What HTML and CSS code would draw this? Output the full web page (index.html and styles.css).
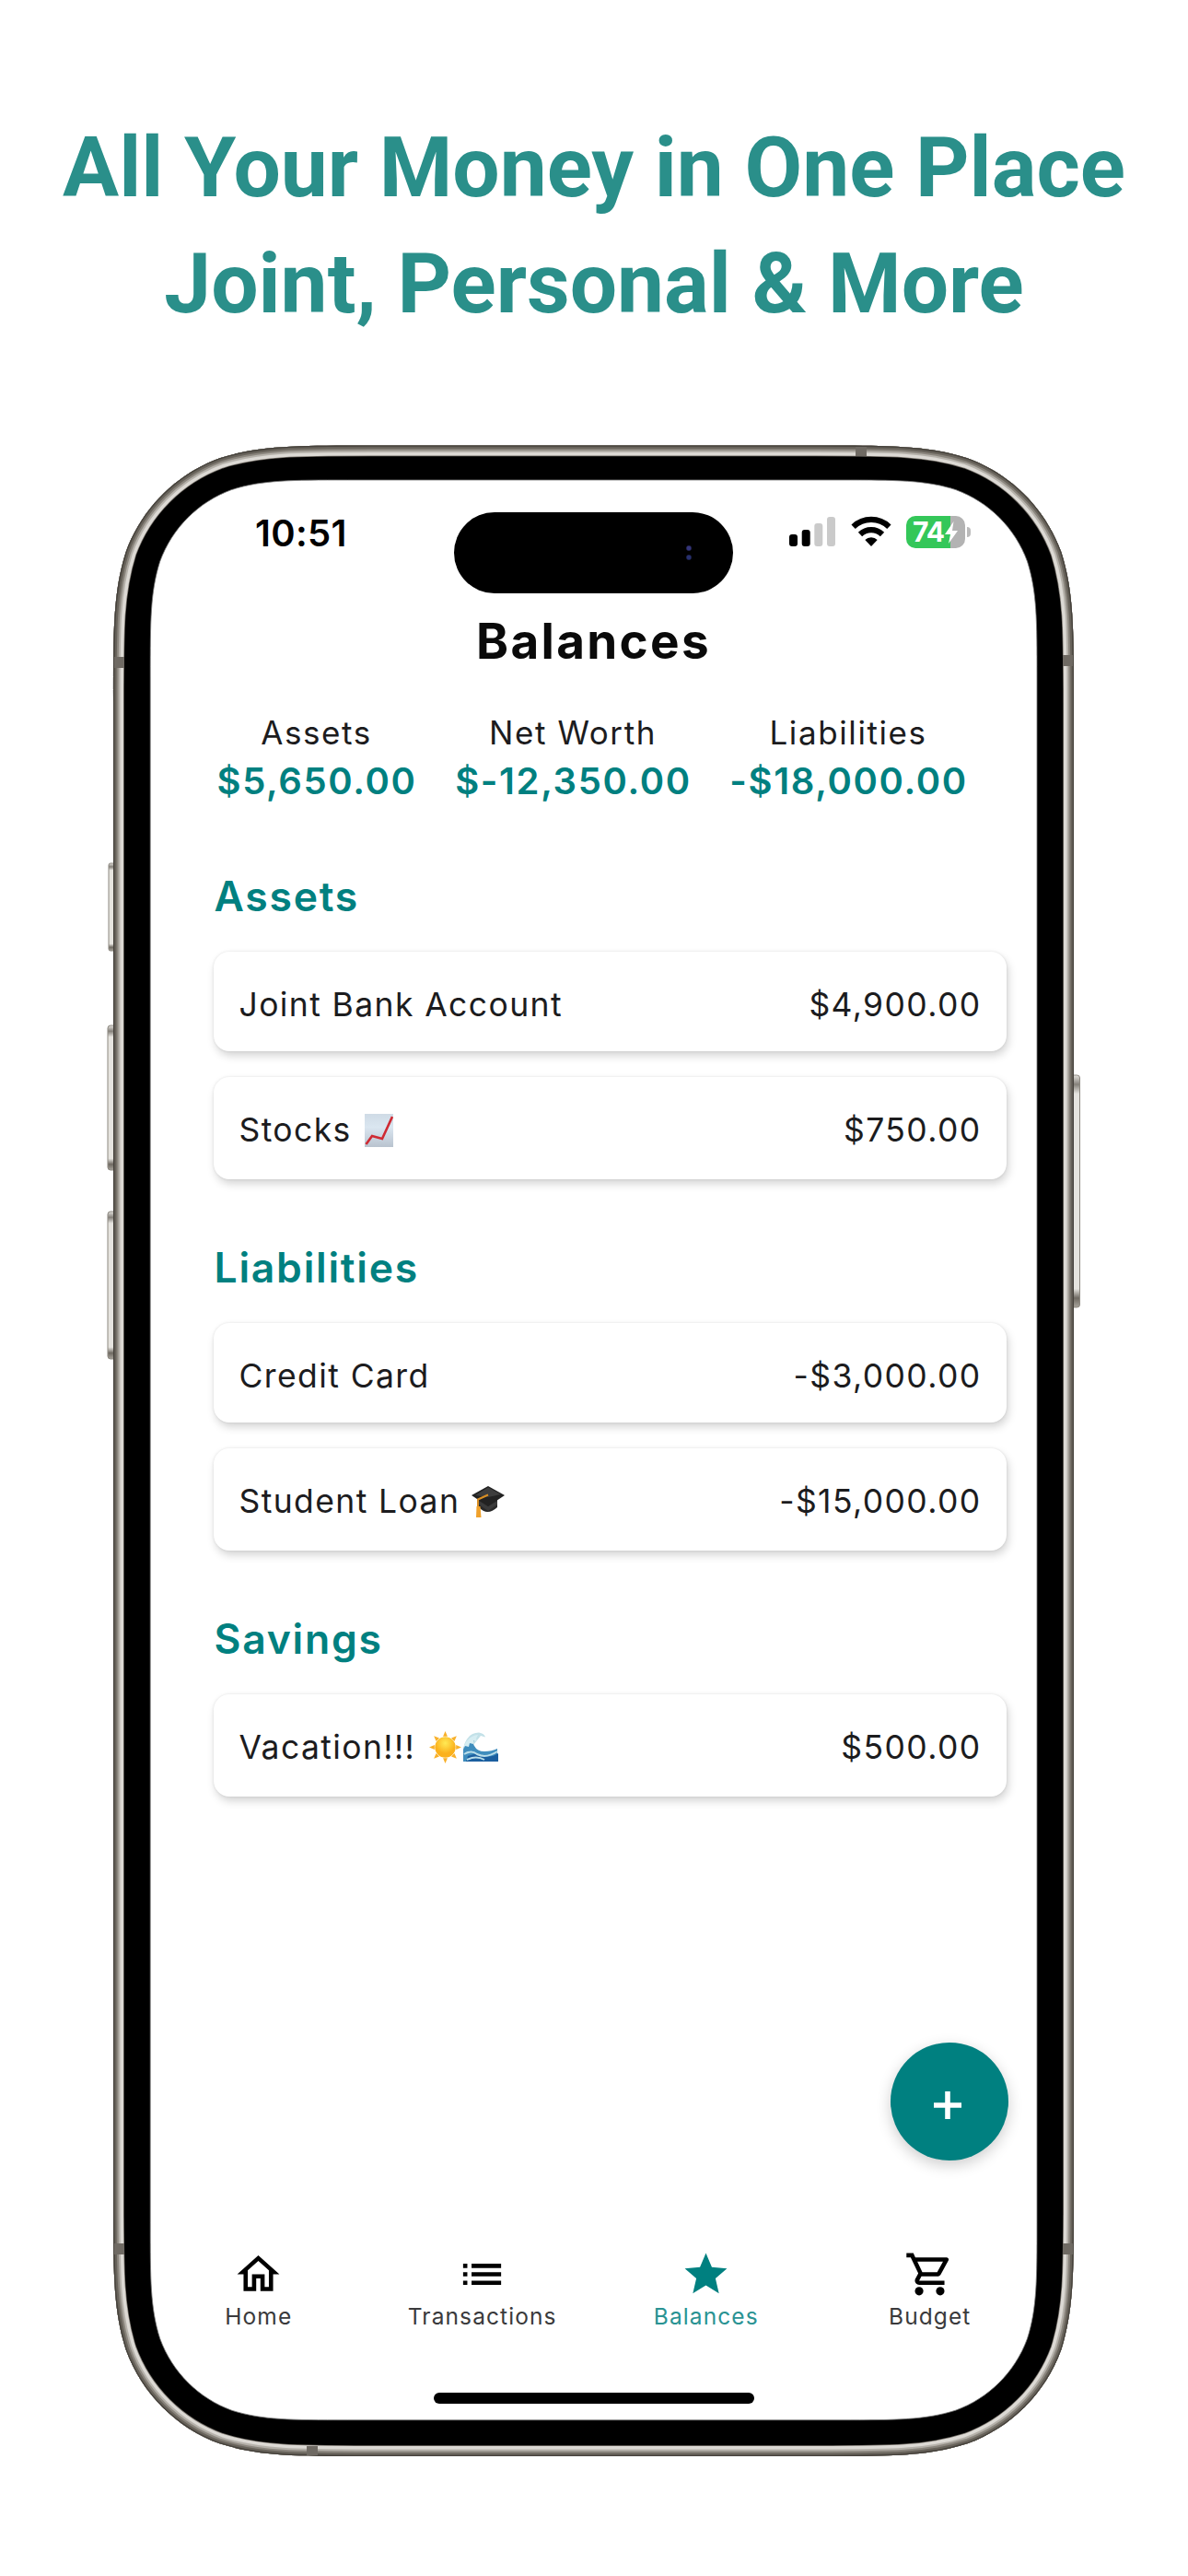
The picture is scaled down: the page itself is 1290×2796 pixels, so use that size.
FILE: index.html
```html
<!DOCTYPE html>
<html lang="en">
<head>
<meta charset="utf-8">
<title>Balances</title>
<link rel="stylesheet" href="styles.css">
</head>
<body>
<h1 class="headline">All Your Money in One Place<br>Joint, Personal &amp; More</h1>

<main class="device">
  <svg class="frame" viewBox="105 473 1080 2200" aria-hidden="true">
    <defs>
      <path id="shell" d="M402.7,483.5H886.3c80.5,0 120.8,0 164.1,13.7c47.3,17.2 84.6,54.5 101.9,101.9c13.7,43.3 13.7,83.6 13.7,164.1V2386.3c0,80.5 0,120.8 -13.7,164.1c-17.2,47.3 -54.5,84.6 -101.9,101.9c-43.3,13.7 -83.6,13.7 -164.1,13.7H402.7c-80.5,0 -120.8,0 -164.1,-13.7c-47.3,-17.2 -84.6,-54.5 -101.9,-101.9c-13.7,-43.3 -13.7,-83.6 -13.7,-164.1V763.2c0,-80.5 0,-120.8 13.7,-164.1c17.2,-47.3 54.5,-84.6 101.9,-101.9c43.3,-13.7 83.6,-13.7 164.1,-13.7z"/>
      <clipPath id="inside"><use href="#shell"/></clipPath>
      <linearGradient id="btn" x1="0" y1="0" x2="0" y2="1">
        <stop offset="0" stop-color="#e4e2de"/><stop offset=".04" stop-color="#85817a"/><stop offset=".08" stop-color="#e6e4df"/>
        <stop offset=".92" stop-color="#e6e4df"/><stop offset=".96" stop-color="#6f6a62"/><stop offset="1" stop-color="#a8a49c"/>
      </linearGradient>
    </defs>
    <g fill="url(#btn)" stroke="#8d8981" stroke-width="1">
      <rect x="118" y="937" width="9" height="95" rx="2"/>
      <rect x="117" y="1113" width="10" height="157" rx="3"/>
      <rect x="117" y="1315" width="10" height="160" rx="3"/>
      <rect x="1162" y="1167" width="10.500" height="252" rx="3"/>
    </g>
    <use href="#shell" fill="#000"/>
    <g clip-path="url(#inside)" fill="none">
      <use href="#shell" stroke="#76716a" stroke-width="23.500"/>
      <use href="#shell" stroke="#dcd9d4" stroke-width="22"/>
      <use href="#shell" stroke="#b5b1aa" stroke-width="15"/>
      <use href="#shell" stroke="#8a857d" stroke-width="11"/>
      <use href="#shell" stroke="#67625a" stroke-width="7"/>
      <use href="#shell" stroke="#46423c" stroke-width="2.500"/>
      <g fill="#6f6a63">
        <rect x="124" y="713" width="11" height="12"/><rect x="1154" y="711" width="11" height="12"/>
        <rect x="124" y="2435" width="11" height="12"/><rect x="1154" y="2435" width="11" height="12"/>
        <rect x="929" y="485" width="12" height="10"/><rect x="333" y="2655" width="12" height="10"/>
      </g>
    </g>
    <path fill="#fff" stroke="#777" stroke-width=".8" d="M377.2,521H912c61.600,0 92.400,0 125.600,10.500c36.200,13.200 64.700,41.700 77.900,77.900c10.500,33.200 10.500,64 10.500,125.600V2412.700c0,61.600 0,92.400 -10.500,125.600c-13.200,36.200 -41.700,64.700 -77.900,77.900c-33.200,10.500 -64,10.500 -125.600,10.500H377.200c-61.600,0 -92.400,0 -125.600,-10.500c-36.200,-13.200 -64.700,-41.700 -77.900,-77.900c-10.500,-33.200 -10.500,-64 -10.500,-125.600V735c0,-61.600 0,-92.400 10.500,-125.600c13.200,-36.200 41.700,-64.700 77.900,-77.900c33.200,-10.500 64,-10.500 125.600,-10.500z"/>
  </svg>

  <div class="screen">
    <div class="status">
      <span class="time">10:51</span>
      <div class="island"><span class="lens"></span></div>
      <div class="indicators">
        <svg class="signal" viewBox="0 0 50 32"><rect y="19" width="9" height="13" rx="3"/><rect x="13.700" y="14" width="9" height="18" rx="3"/><g fill="#cacaca"><rect x="27.300" y="7" width="9" height="25" rx="3"/><rect x="41" width="9" height="32" rx="3"/></g></svg>
        <svg class="wifi" viewBox="0 0 44 33"><g fill="none" stroke="#000" stroke-width="6.200"><path d="M2.600 11.700a28 28 0 0 1 38.800 0"/><path d="M10 20a17.300 17.300 0 0 1 24 0"/></g><path d="M22 33l-6.700-7a9.800 9.800 0 0 1 13.400 0z"/></svg>
        <div class="battery"><span>74</span><svg viewBox="0 0 16 26"><path fill="#fff" d="M10.500 1L1 15h6l-2 10L15 11H9z"/></svg></div>
      </div>
    </div>

    <h2 class="title">Balances</h2>

    <div class="summary">
      <div class="stat"><span class="stat-label">Assets</span><span class="stat-value">$5,650.00</span></div>
      <div class="stat"><span class="stat-label">Net Worth</span><span class="stat-value">$-12,350.00</span></div>
      <div class="stat"><span class="stat-label">Liabilities</span><span class="stat-value">-$18,000.00</span></div>
    </div>

    <section class="group">
      <h3>Assets</h3>
      <div class="card plain"><span>Joint Bank Account</span><span>$4,900.00</span></div>
      <div class="card"><span>Stocks <svg class="emoji chart" viewBox="0 0 31 36"><defs><linearGradient id="paper" x1="0" y1="0" x2="0" y2="1"><stop stop-color="#cfdbe6"/><stop offset=".4" stop-color="#dae6f0"/><stop offset="1" stop-color="#b9c3cf"/></linearGradient></defs><path fill="url(#paper)" d="M0 0h31v36H0z"/><path d="M1.500 33L8 24l11 3L30 3" fill="none" stroke="#cf2a33" stroke-width="2.600"/></svg></span><span>$750.00</span></div>
    </section>

    <section class="group">
      <h3>Liabilities</h3>
      <div class="card plain"><span>Credit Card</span><span>-$3,000.00</span></div>
      <div class="card"><span>Student Loan <svg class="emoji grad" viewBox="0 0 36 35"><path fill="#292929" d="M8 14v10q9 10 20 0V14z"/><path fill="#3a3a3a" d="M8 17v4l10 7 10-7v-4l-10 6z"/><path fill="#222" d="M0 11L18 1l18 10-18 12z"/><path fill="#3d3d3d" d="M4 11L18 2.500 32 10 18 13z"/><path d="M18 10.500L7 15.500V26" fill="none" stroke="#d98f24" stroke-width="2"/><path fill="#f0a12b" d="M5.500 23h4l1 12H5z"/></svg></span><span>-$15,000.00</span></div>
    </section>

    <section class="group">
      <h3>Savings</h3>
      <div class="card"><span>Vacation!!! <svg class="emoji sun" viewBox="0 0 36 36"><defs><radialGradient id="sunfill" cy=".3"><stop stop-color="#ffea55"/><stop offset="1" stop-color="#fbb11c"/></radialGradient></defs><path fill="#f8b02a" d="M18 0l2.500 6h-5zM18 36l2.500-6h-5zM0 18l6-2.500v5zM36 18l-6-2.500v5zM5.300 5.300l6 2.500-3.500 3.500zM30.700 5.300l-6 2.500 3.500 3.500zM5.300 30.700l6-2.500-3.500-3.500zM30.700 30.700l-6-2.500 3.500-3.500z"/><circle cx="18" cy="18" r="11.500" fill="url(#sunfill)"/></svg><svg class="emoji wave" viewBox="0 0 38 32"><path fill="#c3e1e8" d="M1 14Q5 1 17 .5q6 1 7 5l-5-1.500-8 10z"/><path fill="#3f8dbd" d="M0 32V18Q4 6 14 5q-5 6-2 10 3 6 11 6 8 0 14-3v14z"/><path fill="#d6edf2" d="M1 14Q6 4 16 3l-2 4 1 3-4-1 0 4-4-1-1 4-4-1-2 4z"/><path fill="#1b5f9f" d="M5 26q12-5 18 0 8 2 15-3v9H3z"/><path d="M1 24q8-5 14 0 10 5 22-3M4 30q10-5 19 0" fill="none" stroke="#b8dde9" stroke-width="2"/></svg></span><span>$500.00</span></div>
    </section>

    <button class="fab" aria-label="Add"><svg viewBox="0 0 30 30"><path d="M15 0v30M0 15h30" stroke="#fff" stroke-width="5.600"/></svg></button>

    <nav class="tabs">
      <a class="tab"><svg viewBox="0 0 24 24"><path d="M12 5.690l5 4.500V18h-2v-6H9v6H7v-7.810l5-4.500M12 3L2 12h3v8h6v-6h2v6h6v-8h3L12 3z"/></svg><span>Home</span></a>
      <a class="tab"><svg viewBox="0 0 24 24"><path d="M3 7h2v2H3zM3 11h2v2H3zM3 15h2v2H3zM7 7h14v2H7zM7 11h14v2H7zM7 15h14v2H7z"/></svg><span>Transactions</span></a>
      <a class="tab active"><svg viewBox="0 0 24 24"><path d="M12 17.270L18.180 21l-1.640-7.030L22 9.240l-7.190-.61L12 2 9.190 8.630 2 9.240l5.460 4.730L5.820 21z"/></svg><span>Balances</span></a>
      <a class="tab"><svg viewBox="0 0 24 24"><path d="M15.550 13c.75 0 1.410-.41 1.750-1.030l3.580-6.490c.37-.66-.11-1.480-.87-1.480H5.210l-.94-2H1v2h2l3.600 7.590-1.350 2.440C4.520 15.370 5.480 17 7 17h12v-2H7l1.100-2h7.450zM6.160 6h12.150l-2.760 5H8.530L6.160 6z"/><circle cx="7" cy="20" r="2"/><circle cx="17" cy="20" r="2"/></svg><span>Budget</span></a>
    </nav>
    <div class="home-bar"></div>
  </div>
</main>
</body>
</html>
```
FILE: styles.css
```css
* { box-sizing: border-box; }
body {
  margin: 0;
  width: 1290px;
  height: 2796px;
  overflow: hidden;
  background: #fff;
  color: #1c1c1e;
  font-family: Inter, "Liberation Sans", sans-serif;
}
h1, h2, h3 { margin: 0; }
svg { display: block; }

.headline {
  padding-top: 119px;
  text-align: center;
  font: 700 91px/126px Roboto, "Liberation Sans", sans-serif;
  color: #2a8f8a;
}

.device {
  position: relative;
  width: 1043px;
  margin: 112px 0 0 123px;
  padding: 38px 40px;
}
.frame {
  position: absolute;
  left: -18px;
  top: -10px;
  width: 1080px;
  height: 2200px;
}
.screen {
  position: relative;
  display: flex;
  flex-direction: column;
  width: 963px;
  height: 2106px;
  padding-bottom: 18px;
}

.status {
  display: grid;
  grid-template-columns: 330px 303px 1fr;
  align-items: start;
  height: 123px;
  padding-top: 35px;
}
.time {
  padding: 3px 0 0 114px;
  font-size: 40px;
  line-height: 40px;
  font-weight: 600;
  letter-spacing: .3px;
  color: #000;
}
.island {
  display: flex;
  align-items: center;
  justify-content: flex-end;
  height: 88px;
  padding-right: 45px;
  border-radius: 44px;
  background: #000;
}
.lens {
  width: 6px;
  height: 16px;
  background: radial-gradient(circle at 3px 3px, #34357a 0 2px, transparent 3.500px), radial-gradient(circle at 3px 13px, #28306e 0 2px, transparent 3.500px);
}
.indicators {
  display: flex;
  align-items: flex-start;
  padding: 4px 0 0 61px;
}
.signal { width: 50px; height: 32px; margin-top: 1px; }
.wifi { width: 44px; height: 33px; margin-left: 17px; }
.battery {
  position: relative;
  display: flex;
  align-items: center;
  width: 64px;
  height: 35px;
  margin-left: 16px;
  padding-left: 7px;
  border-radius: 10px;
  background: linear-gradient(90deg, #34c759 48px, #b3b3b3 48px);
  color: #fff;
  font-size: 30px;
  line-height: 35px;
  font-weight: 700;
  letter-spacing: -1px;
}
.battery svg { width: 16px; height: 26px; }
.battery::after {
  content: "";
  position: absolute;
  left: 66px;
  top: 12px;
  width: 4px;
  height: 11px;
  border-radius: 0 4px 4px 0;
  background: #bbb;
}

.title {
  margin-top: 22px;
  text-align: center;
  font-size: 53px;
  line-height: 60px;
  font-weight: 700;
  letter-spacing: 2.300px;
  color: #0a0a0a;
}
.summary {
  display: flex;
  gap: 41.500px;
  margin-top: 47px;
  padding-left: 72.500px;
}
.stat {
  display: flex;
  flex-direction: column;
  align-items: center;
  gap: 4px;
  white-space: nowrap;
}
.stat-label { margin-left: -1px; font-size: 35px; line-height: 44px; letter-spacing: 1.600px; }
.stat-value { font-size: 40px; line-height: 54px; font-weight: 600; letter-spacing: 1.650px; color: #008080; }

.group {
  display: flex;
  flex-direction: column;
  gap: 28px;
  padding: 0 33.500px 0 68.500px;
  margin-top: 69px;
}
.summary + .group { margin-top: 71px; }
.group h3 {
  margin-bottom: 4.500px;
  padding-left: 1px;
  font-size: 44.500px;
  line-height: 54px;
  font-weight: 600;
  letter-spacing: 1.750px;
  color: #008080;
}
.card {
  display: flex;
  align-items: center;
  justify-content: space-between;
  height: 111px;
  padding: 4.500px 27px 0 28px;
  border-radius: 17px;
  background: #fff;
  box-shadow: 2px 5px 10px rgba(0, 0, 0, .17), 0 0 3px rgba(0, 0, 0, .1);
  font-size: 35.500px;
  letter-spacing: 1.400px;
  white-space: nowrap;
}
.card.plain { height: 108.500px; padding-top: 7px; }
.card span { display: flex; align-items: center; white-space: pre; }
.emoji { flex: none; }
.chart { width: 31px; height: 36px; margin-left: 3px; }
.grad { width: 36px; height: 35px; margin-left: 1.500px; }
.sun { width: 35px; height: 35px; margin-left: 3px; }
.wave { width: 38px; height: 32px; margin-left: 2px; }

.fab {
  position: absolute;
  left: 804px;
  top: 1696px;
  display: flex;
  align-items: center;
  justify-content: center;
  width: 127.500px;
  height: 128px;
  padding: 7px 3px 0 0;
  border: 0;
  border-radius: 50%;
  background: #008080;
  box-shadow: 0 5px 16px rgba(0, 0, 0, .2);
}
.fab svg { width: 30px; height: 30px; }

.tabs {
  display: grid;
  grid-template-columns: repeat(4, 243px);
  justify-content: center;
  margin-top: auto;
}
.tab {
  display: flex;
  flex-direction: column;
  align-items: center;
  gap: 3.500px;
  font-size: 24.500px;
  line-height: 30px;
  letter-spacing: 1.100px;
  color: #3a3a3c;
}
.tab span { padding-left: 1.500px; }
.tab svg { width: 55px; height: 55px; fill: #000; }
.tab.active { color: #2a9393; }
.tab.active svg { fill: #008080; }
.home-bar {
  flex: none;
  width: 348px;
  height: 12px;
  margin: 68px auto 0;
  border-radius: 6px;
  background: #000;
}
```
